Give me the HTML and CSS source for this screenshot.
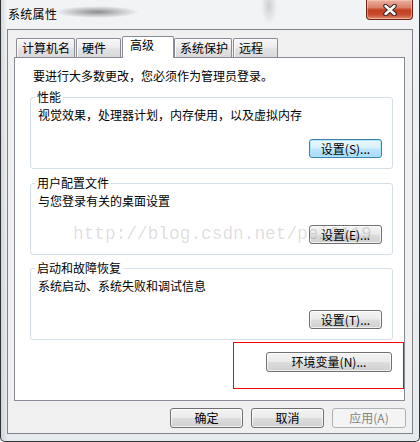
FILE: index.html
```html
<!DOCTYPE html>
<html lang="zh-CN">
<head>
<meta charset="utf-8">
<title>系统属性</title>
<link rel="stylesheet" href="styles.css">
</head>
<body>
<div class="window">
  <div class="titlebar">
    <div class="title">系统属性</div>
    <div class="close">
      <svg width="14" height="12" viewBox="0 0 14 12">
        <path d="M2.5 2 L11.5 10 M11.5 2 L2.5 10" stroke="#3b2a2a" stroke-width="4.6" stroke-linecap="round" fill="none"/>
        <path d="M2.5 2 L11.5 10 M11.5 2 L2.5 10" stroke="#ffffff" stroke-width="2.4" stroke-linecap="round" fill="none"/>
      </svg>
    </div>
  </div>
  <div class="client">
    <div class="tabs">
      <div class="tab">计算机名</div>
      <div class="tab">硬件</div>
      <div class="tab sel">高级</div>
      <div class="tab">系统保护</div>
      <div class="tab">远程</div>
    </div>
    <div class="panel">
      <div class="intro">要进行大多数更改，您必须作为管理员登录。</div>
      <div class="group">
        <div class="legend"><span>性能</span></div>
        <div class="desc">视觉效果，处理器计划，内存使用，以及虚拟内存</div>
        <div class="actions"><button class="btn focus">设置(S)...</button></div>
      </div>
      <div class="group">
        <div class="legend"><span>用户配置文件</span></div>
        <div class="desc">与您登录有关的桌面设置</div>
        <div class="actions"><button class="btn">设置(E)...</button></div>
      </div>
      <div class="group">
        <div class="legend"><span>启动和故障恢复</span></div>
        <div class="desc">系统启动、系统失败和调试信息</div>
        <div class="actions"><button class="btn">设置(T)...</button></div>
      </div>
      <div class="env-row"><button class="btn wide">环境变量(N)...</button></div>
      <div class="watermark">http://blog.csdn.net/pei6119</div>
      <div class="annot"></div>
    </div>
    <div class="footer">
      <button class="btn foot">确定</button>
      <button class="btn foot">取消</button>
      <button class="btn foot apply disabled">应用(A)</button>
    </div>
  </div>
</div>
</body>
</html>
```
FILE: styles.css
```css
html, body {
  margin: 0;
  padding: 0;
}
body {
  width: 420px;
  height: 442px;
  overflow: hidden;
  background: #ffffff;
  font-family: "Noto Sans CJK SC", "Noto Sans", sans-serif;
  font-size: 12px;
  color: #000;
}
.window {
  box-sizing: border-box;
  width: 420px;
  height: 442px;
  border: 1px solid #2f3336;
  border-top: none;
  border-radius: 0 0 5px 5px;
  padding: 0 6px 7px 6px;
  display: flex;
  flex-direction: column;
  background:
    radial-gradient(ellipse 42px 6px at 96px 12px, rgba(60,60,60,0.55), rgba(60,60,60,0)),
    radial-gradient(ellipse 8px 18px at 268px 6px, rgba(140,140,140,0.35), rgba(140,140,140,0)),
    linear-gradient(to right, rgba(90,100,110,0.18), rgba(90,100,110,0) 6px),
    linear-gradient(#f1f3f5, #e5eaef);
}
.titlebar {
  height: 29px;
  flex: none;
  display: flex;
  justify-content: space-between;
  align-items: flex-start;
}
.title {
  padding: 7px 0 0 1px;
  line-height: 14px;
  letter-spacing: 0.3px;
}
.close {
  box-sizing: border-box;
  width: 47px;
  height: 20px;
  border: 1px solid #6b2418;
  border-top: none;
  border-radius: 0 0 4px 4px;
  background: linear-gradient(#eab0a0 0%, #dc8068 40%, #c3401f 52%, #c84a2e 78%, #e39476 100%);
  box-shadow: inset 0 0 0 1px rgba(255,220,200,0.45);
  display: flex;
  align-items: center;
  justify-content: center;
}
.client {
  box-sizing: border-box;
  flex: none;
  height: 405px;
  border: 1px solid #7f8387;
  background: #f0f0f0;
  padding: 6px 6px 0 6px;
  display: flex;
  flex-direction: column;
}
.tabs {
  display: flex;
  align-items: flex-end;
  height: 22px;
  margin: 0 0 -1px 2px;
  position: relative;
  z-index: 1;
}
.tab {
  box-sizing: border-box;
  height: 19px;
  min-width: 45px;
  margin: 0 1px 1px 0;
  padding: 2px 4px 0 5px;
  border: 1px solid #898c95;
  border-bottom: none;
  border-radius: 2px 2px 0 0;
  line-height: 14px;
  white-space: nowrap;
  background: linear-gradient(#f7f7f7 0%, #ededed 45%, #e2e2e2 55%, #d9d9d9 100%);
  box-shadow: inset 1px 1px 0 rgba(255,255,255,0.8);
}
.tab.sel {
  height: 22px;
  min-width: 52px;
  margin: 0;
  padding: 1px 4px 0 7px;
  background: #ffffff;
  box-shadow: none;
}
.tab:nth-child(4) {
  padding-right: 3px;
}
.panel {
  box-sizing: border-box;
  flex: none;
  width: 391px;
  height: 344px;
  border: 1px solid #898c95;
  background: #ffffff;
  position: relative;
}
.intro {
  margin: 11px 0 0 18px;
  line-height: 14px;
}
.group {
  margin: 14px 11px 0 15px;
  border: 1px solid #d5dfe5;
  border-radius: 3px;
  padding: 0 10px 10px 7px;
}
.group:first-of-type {
  margin-top: 15px;
}
.group + .group + .group {
  margin-top: 13px;
}
.legend {
  height: 14px;
  margin-top: -8px;
  line-height: 14px;
}
.legend span {
  background: #ffffff;
  padding: 0 2px;
  margin-left: -3px;
}
.desc {
  margin-top: 4px;
  line-height: 14px;
}
.actions {
  display: flex;
  justify-content: flex-end;
  margin-top: 17px;
}
.btn {
  box-sizing: border-box;
  width: 73px;
  height: 19px;
  padding: 0;
  margin: 0;
  border: 1px solid #707070;
  border-radius: 3px;
  background: linear-gradient(#f3f3f3 0%, #ebebeb 48%, #dddddd 52%, #cfcfcf 100%);
  box-shadow: inset 0 0 0 1px rgba(255,255,255,0.7);
  font-family: "Noto Sans CJK SC", "Noto Sans", sans-serif;
  font-size: 12px;
  line-height: 16px;
  color: #000;
  text-align: center;
  white-space: nowrap;
}
.btn.focus {
  border-color: #3c7fb1;
  background: linear-gradient(#eaf6fd 0%, #d9f0fc 48%, #bee6fd 52%, #a7d9f5 100%);
  box-shadow: inset 0 0 0 1px rgba(170,230,252,0.9);
}
.btn.wide {
  width: 126px;
  height: 20px;
}
.env-row {
  display: flex;
  justify-content: flex-end;
  margin: 12px 12px 0 0;
}
.footer {
  display: flex;
  justify-content: flex-end;
  gap: 8px;
  margin-top: 7px;
}
.btn.foot {
  height: 20px;
}
.btn.apply {
  width: 74px;
}
.btn.disabled {
  border-color: #adb2b5;
  background: #f4f4f4;
  box-shadow: none;
  color: #838383;
}
.watermark {
  position: absolute;
  left: 58px;
  top: 167px;
  font-family: "Liberation Mono", monospace;
  font-size: 17.8px;
  line-height: 18px;
  color: rgba(0,0,0,0.15);
  white-space: nowrap;
  pointer-events: none;
  z-index: 2;
}
.annot {
  position: absolute;
  box-sizing: border-box;
  left: 218px;
  top: 284px;
  width: 171px;
  height: 47px;
  border: 1px solid #ff0000;
}
```
